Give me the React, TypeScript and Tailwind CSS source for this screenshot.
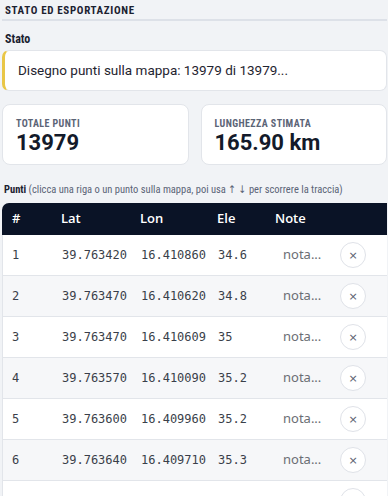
import React from "react";

const cond = "font-['Roboto_Condensed','DejaVu_Sans_Condensed','Roboto',sans-serif]";

type Punto = { n: number; lat: string; lon: string; ele: string };

const primi: Punto[] = [
    { n: 1, lat: "39.763420", lon: "16.410860", ele: "34.6" },
    { n: 2, lat: "39.763470", lon: "16.410620", ele: "34.8" },
    { n: 3, lat: "39.763470", lon: "16.410609", ele: "35" },
    { n: 4, lat: "39.763570", lon: "16.410090", ele: "35.2" },
    { n: 5, lat: "39.763600", lon: "16.409960", ele: "35.2" },
    { n: 6, lat: "39.763640", lon: "16.409710", ele: "35.3" },
];

const punti: Punto[] = [...primi];
for (let i = 7; i <= 300; i++) {
    punti.push({
        n: i,
        lat: (39.76364 + (i - 6) * 0.00004).toFixed(6),
        lon: (16.40971 - (i - 6) * 0.00023).toFixed(6),
        ele: (35.3 + (i - 6) * 0.1).toFixed(1),
    });
}

export default function App() {
    return (
        <div className="h-[496px] overflow-hidden bg-[#f1f3f6] pl-[2px] pr-[1px] text-[#1b2130]">
            <div className={`${cond} border-b-2 border-[#dde1e8] pl-[3px] pt-[4px] pb-[2px] text-[11px] font-bold uppercase leading-[13px] tracking-[0.06em] text-[#1b2130]`}>
                Stato ed esportazione
            </div>

            <div className={`${cond} mt-[11px] pl-[3px] text-[12px] font-bold leading-[15px] text-[#1b2130]`}>
                Stato
            </div>

            <div className="mt-[3px] flex h-[41px] items-center rounded-[7px] border border-l-[3px] border-[#e2e5ea] border-l-[#e9c646] bg-white pl-[13px] font-['Roboto',sans-serif] text-[13.5px] text-[#1f2430]">
                Disegno punti sulla mappa: 13979 di 13979...
            </div>

            <div className="mt-[13px] flex gap-[12px]">
                {[
                    { label: "Totale punti", value: "13979" },
                    { label: "Lunghezza stimata", value: "165.90 km" },
                ].map((card, index) => (
                    <div
                        key={index}
                        className="h-[61px] flex-1 rounded-[8px] border border-[#e2e5ea] bg-white pl-[13px] pt-[12px]"
                    >
                        <div className={`${cond} text-[10px] font-bold uppercase leading-[13px] tracking-[0.04em] text-[#5b6476]`}>
                            {card.label}
                        </div>
                        <div className="font-['Roboto',sans-serif] text-[22px] font-bold leading-[26px] text-[#131a2a]">
                            {card.value}
                        </div>
                    </div>
                ))}
            </div>

            <div className={`${cond} mt-[17px] whitespace-nowrap pl-[2px] text-[10.5px] leading-[15px]`}>
                <span className="font-bold text-[#1b2130]">Punti</span>{" "}
                <span className="text-[#5b6476]">
                    (clicca una riga o un punto sulla mappa, poi usa ↑ ↓ per scorrere la traccia)
                </span>
            </div>

            <div className="mt-[6px] h-[340px] overflow-y-scroll">
                <div className="sticky top-0 grid h-[32px] grid-cols-[49px_79px_77px_58px_65px_1fr] items-center rounded-tl-[7px] bg-[#0a1326] font-['Open_Sans',sans-serif] text-[13px] font-semibold text-white">
                    <div className="pl-[10px]">#</div>
                    <div className="pl-[10px]">Lat</div>
                    <div className="pl-[10px]">Lon</div>
                    <div className="pl-[10px]">Ele</div>
                    <div className="pl-[10px]">Note</div>
                    <div></div>
                </div>
                {punti.map((p) => (
                    <div
                        key={p.n}
                        className={`grid h-[41px] grid-cols-[49px_79px_77px_58px_65px_1fr] items-center border-b border-l border-[#e2e5ea] font-['DejaVu_Sans_Mono',monospace] text-[12px] text-[#3a3f4a] ${p.n % 2 === 0 ? "bg-[#f6f7f9]" : "bg-white"}`}
                    >
                        <div className="pl-[9px]">{p.n}</div>
                        <div className="pl-[10px]">{p.lat}</div>
                        <div className="pl-[10px]">{p.lon}</div>
                        <div className="pl-[10px]">{p.ele}</div>
                        <div className="pl-[17px] font-['Noto_Sans',sans-serif] text-[13px] text-[#6b6e74]">nota...</div>
                        <div className="pl-[9px]">
                            <button className="flex h-[26px] w-[26px] items-center justify-center rounded-full border border-[#dfe2e8] bg-white font-['DejaVu_Sans',sans-serif] text-[11px] leading-none text-[#596170]">
                                ×
                            </button>
                        </div>
                    </div>
                ))}
            </div>
        </div>
    );
}
